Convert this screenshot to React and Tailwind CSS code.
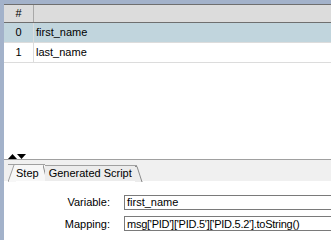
import React from 'react';

const rows = [
  {n: 0, name: 'first_name', sel: true},
  {n: 1, name: 'last_name', sel: false},
];

export default function App() {
  return (
    <div className="w-[331px] h-[240px] overflow-hidden bg-[#a3b2ca] pl-[4px] pt-[4px] text-[11px] text-black" style={{fontFamily: '"Liberation Sans", Arial, sans-serif'}}>
      <div className="flex h-full flex-col bg-white">
        <div className="flex h-[19px] border-y border-[#6f6f6f] bg-[#dcdcdc]">
          <div className="flex w-[30px] items-center justify-center border-r border-[#a8a8a8]">#</div>
          <div className="flex-1" />
        </div>
        {rows.map(r => (
          <div key={r.n} className={`flex h-[20px] border-b border-[#dcdcdc] ${r.sel ? 'bg-[#c1d5dd]' : 'bg-white'}`}>
            <div className="flex w-[30px] items-center justify-center border-r border-[#dcdcdc]">{r.n}</div>
            <div className="flex items-center pl-[2px]">{r.name}</div>
          </div>
        ))}
        <div className="flex-1" />
        <div className="flex h-[5px] items-end border-b border-[#a0a0a0] pl-[4px]">
          <svg width="18" height="5" viewBox="0 0 18 5">
            <polygon points="0,5 4.5,0 9,5" fill="#000" />
            <polygon points="9,0 18,0 13.5,5" fill="#000" />
          </svg>
        </div>
        <div className="flex h-[21px] items-end bg-[#f0f0f0] pl-[4px]">
          <div className="relative flex h-[17px] items-center border-t border-[#a0a0a0] bg-[#f7f7f7] pl-[8px] pr-[6px]">
            <svg className="absolute left-0 top-0" width="8" height="17" viewBox="0 0 8 17">
              <rect x="0" y="0" width="8" height="17" fill="#f0f0f0" />
              <polygon points="0,17 6,0 8,0 8,17" fill="#f7f7f7" />
              <line x1="0" y1="17" x2="6" y2="0" stroke="#a0a0a0" />
            </svg>
            <span className="relative">Step</span>
            <svg className="absolute -right-[4px] top-0" width="6" height="17" viewBox="0 0 6 17">
              <line x1="0" y1="0" x2="4" y2="16" stroke="#8a8a8a" />
            </svg>
          </div>
          <div className="relative flex h-[16px] items-center border-t border-[#a0a0a0] bg-[#ececec] pl-[4px] pr-[5px]">
            <span>Generated Script</span>
            <svg className="absolute -right-[6px] top-0" width="8" height="16" viewBox="0 0 8 16">
              <rect x="0" y="0" width="8" height="16" fill="#f0f0f0" />
              <polygon points="0,0 2,0 7,16 0,16" fill="#ececec" />
              <path d="M0 0.5 H2 L7 16" stroke="#8a8a8a" fill="none" />
            </svg>
          </div>
        </div>
        <div className="flex h-[59px] flex-col gap-[5px] bg-white pt-[13px]">
          <div className="flex items-center whitespace-nowrap">
            <div className="w-[106px] shrink-0 text-right">Variable:</div>
            <div className="ml-[14px] flex h-[15px] w-[230px] shrink-0 items-center border border-[#7a7a7a] pl-[2px]">first_name</div>
          </div>
          <div className="flex items-center whitespace-nowrap">
            <div className="w-[106px] shrink-0 text-right">Mapping:</div>
            <div className="ml-[14px] flex h-[15px] w-[230px] shrink-0 items-center border border-[#7a7a7a] pl-[2px] tracking-[-0.25px]">msg['PID']['PID.5']['PID.5.2'].toString()</div>
          </div>
        </div>
      </div>
    </div>
  );
}
